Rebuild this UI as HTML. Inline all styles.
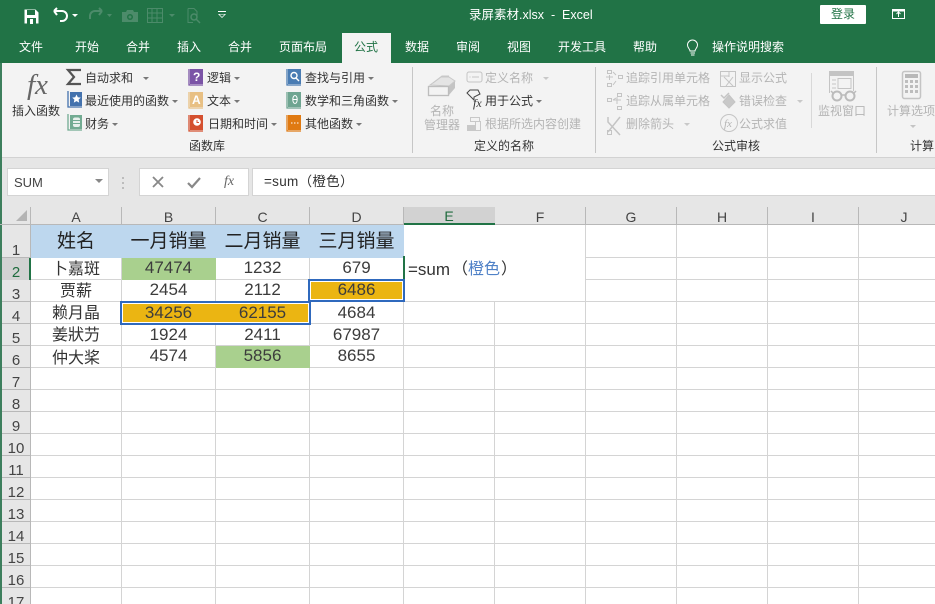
<!DOCTYPE html>
<html lang="zh"><head><meta charset="utf-8"><title>录屏素材.xlsx - Excel</title>
<style>
html,body{margin:0;padding:0;width:935px;height:604px;overflow:hidden;background:#fff}
body{position:relative;font-family:"Liberation Sans","Noto Sans CJK SC",sans-serif;font-size:12px;color:#333}
.a{position:absolute}
.t{position:absolute;white-space:nowrap;line-height:18px;height:18px}
.w{color:#fff}
.g{color:#b4b4b4}
.tab{position:absolute;top:38px;height:18px;line-height:18px;color:#fff;white-space:nowrap;transform:translateX(-50%)}
.ar::after{content:"";display:inline-block;margin-left:3px;vertical-align:2px;border:3px solid transparent;border-top:3px solid #777;border-bottom:0}
.gar::after{content:"";display:inline-block;margin-left:3px;vertical-align:2px;border:3px solid transparent;border-top:3px solid #c8c8c8;border-bottom:0}
.c{position:absolute;text-align:center;font-size:16px;color:#333;height:22px;line-height:21px;white-space:nowrap}
.n{font-size:17px;color:#3c3c3c}
.h{position:absolute;text-align:center;font-size:19px;color:#222;height:32px;line-height:33px;top:225px;white-space:nowrap}
.col{position:absolute;top:208px;height:18px;line-height:19px;text-align:center;font-size:14px;color:#444}
.row{position:absolute;left:2px;width:28px;text-align:center;font-size:15px;color:#444;height:20px;line-height:20px}
</style></head>
<body>
<!-- title & tabs -->
<div class="a" style="left:0;top:0;width:935px;height:63px;background:#217346"></div>
<div class="a" style="left:342px;top:33px;width:49px;height:30px;background:#f3f3f3"></div>
<div class="a" style="left:2px;top:63px;width:933px;height:94px;background:#f3f3f3"></div>
<div class="a" style="left:2px;top:157px;width:933px;height:50px;background:#e6e6e6;border-top:1px solid #d2d2d2;box-sizing:border-box"></div>

<svg class="a" style="left:0;top:0" width="300" height="32">
 <path d="M24.500 9.500h11l3 3v11h-14z" fill="#fff"/><rect x="27" y="10" width="8" height="5" fill="#217346"/><rect x="27" y="18" width="9" height="6" fill="#217346"/><rect x="30" y="19" width="3" height="5" fill="#fff"/>
 <path d="M54 11l3-3M54 11l3 4M54 11h8a5 5 0 0 1 0 10h-2" fill="none" stroke="#fff" stroke-width="2"/>
 <path d="M72 14h6l-3 3z" fill="#fff"/>
 <path d="M102 11l-3-3M102 11l-3 4M102 11h-7a5 5 0 0 0-5 5v3" fill="none" stroke="#4c8b6a" stroke-width="2"/>
 <path d="M107 14h5l-2.500 3z" fill="#4c8b6a"/>
 <path d="M122 12h4l1-2h6l1 2h4v10h-16z" fill="#4c8b6a"/><circle cx="130" cy="17" r="3" fill="#217346"/><circle cx="130" cy="17" r="1.500" fill="#4c8b6a"/>
 <rect x="147.500" y="8.500" width="15" height="14" fill="none" stroke="#4c8b6a"/><path d="M147 13h16M147 18h16M152 8v15M157 8v15" stroke="#4c8b6a"/>
 <path d="M169 14h6l-3 3z" fill="#4c8b6a"/>
 <path d="M188 8.500h6l3 3v5M188 8.500v14h5" fill="none" stroke="#4c8b6a"/><circle cx="194" cy="17" r="3" fill="none" stroke="#4c8b6a" stroke-width="1.500"/><path d="M196 19l4 4" stroke="#4c8b6a" stroke-width="1.500"/>
 <path d="M218 11.500h8" stroke="#fff"/><path d="M218 14h8l-4 4z" fill="#fff"/><path d="M219.500 14.500h5l-2.500 2.500z" fill="#217346"/>
</svg>
<div class="t w" style="left:469px;top:6px;font-size:12.500px">录屏素材.xlsx&nbsp; -&nbsp; Excel</div>
<div class="a" style="left:820px;top:5px;width:46px;height:19px;background:#fff;border-radius:1px;color:#217346;text-align:center;line-height:19px">登录</div>
<svg class="a" style="left:890px;top:6px" width="20" height="16"><rect x="2.500" y="3.500" width="12" height="9" fill="none" stroke="#fff"/><path d="M2 4.500h13" stroke="#fff" stroke-width="2"/><path d="M8.500 11V6.500M6.500 8l2-2 2 2" fill="none" stroke="#fff"/></svg>

<div class="tab" style="left:31px">文件</div>
<div class="tab" style="left:87px">开始</div>
<div class="tab" style="left:138px">合并</div>
<div class="tab" style="left:189px">插入</div>
<div class="tab" style="left:240px">合并</div>
<div class="tab" style="left:303px">页面布局</div>
<div class="tab" style="left:366px;color:#217346">公式</div>
<div class="tab" style="left:417px">数据</div>
<div class="tab" style="left:468px">审阅</div>
<div class="tab" style="left:519px">视图</div>
<div class="tab" style="left:582px">开发工具</div>
<div class="tab" style="left:645px">帮助</div>
<svg class="a" style="left:684px;top:38px" width="18" height="20" fill="none" stroke="#fff"><path d="M6 13c0-2-2.500-3-2.500-6a5 5 0 0 1 10 0c0 3-2.500 4-2.500 6z"/><path d="M6.500 15h4.500M7 17h3.500"/></svg>
<div class="tab" style="left:748px">操作说明搜索</div>

<!-- ribbon: function library -->
<div class="t" style="left:27px;top:69px;font:italic 29px/32px 'Liberation Serif',serif;height:32px;color:#666">fx</div>
<div class="t" style="left:12px;top:102px">插入函数</div>
<svg class="a" style="left:0;top:63px" width="420" height="94">
 <path d="M81 7h-13l6 7-6 7h13" fill="none" stroke="#555" stroke-width="2.200"/>
 <!-- recent -->
 <rect x="70" y="29" width="12" height="14" fill="#4472ad"/><path d="M68 28v16h14" fill="none" stroke="#4472ad" stroke-width="1.300"/><path d="M76.500 31.500l1.300 2.800 3 .3-2.200 2 .6 3-2.700-1.500-2.700 1.500.6-3-2.200-2 3-.3z" fill="#fff"/>
 <!-- finance -->
 <rect x="70" y="52" width="12" height="14" fill="#72ab92"/><path d="M68 51v16h14" fill="none" stroke="#72ab92" stroke-width="1.300"/><rect x="73" y="54.500" width="7" height="9.500" rx="2" fill="#e8f0ec"/><path d="M73 57.500h7M73 60.500h7" stroke="#72ab92"/>
 <!-- logic -->
 <rect x="190" y="6" width="13" height="15" fill="#7b54a6"/><path d="M189 6v16h14" fill="none" stroke="#7b54a6" stroke-width="1.300"/>
 <!-- text -->
 <rect x="190" y="29" width="13" height="15" fill="#e8c084"/><path d="M189 29v16h14" fill="none" stroke="#e8c084" stroke-width="1.300"/>
 <!-- date -->
 <rect x="190" y="52" width="13" height="15" fill="#d4502f"/><path d="M189 52v16h14" fill="none" stroke="#d4502f" stroke-width="1.300"/><circle cx="197" cy="59" r="3.800" fill="#fff"/><path d="M197 57v2.500h2" stroke="#d4502f" fill="none"/>
 <!-- lookup -->
 <rect x="288" y="6" width="13" height="15" fill="#4a7cb3"/><path d="M287 6v16h14" fill="none" stroke="#4a7cb3" stroke-width="1.300"/><circle cx="294" cy="12.500" r="3" fill="none" stroke="#fff" stroke-width="1.400"/><path d="M296 15l3 3" stroke="#fff" stroke-width="1.400"/>
 <!-- math -->
 <rect x="288" y="29" width="13" height="15" fill="#6fa591"/><path d="M287 29v16h14" fill="none" stroke="#6fa591" stroke-width="1.300"/><ellipse cx="295" cy="36.500" rx="2.200" ry="4" fill="none" stroke="#fff"/><path d="M293 36.500h4" stroke="#fff"/>
 <!-- other -->
 <rect x="288" y="52" width="13" height="15" fill="#e07a12"/><path d="M287 52v16h14" fill="none" stroke="#e07a12" stroke-width="1.300"/><path d="M291 60h1.500M294 60h1.500M297 60h1.500" stroke="#fff"/>
 <path d="M412.500 4v86" stroke="#c6c6c6"/>
</svg>
<div class="t" style="left:193px;top:68px;width:9px;color:#fff;font-weight:bold">?</div>
<div class="t" style="left:192px;top:91px;width:9px;color:#fff;font-weight:bold">A</div>
<div class="t ar" style="left:85px;top:69px">自动求和 &nbsp;</div>
<div class="t ar" style="left:85px;top:92px">最近使用的函数</div>
<div class="t ar" style="left:85px;top:115px">财务</div>
<div class="t ar" style="left:207px;top:69px">逻辑</div>
<div class="t ar" style="left:207px;top:92px">文本</div>
<div class="t ar" style="left:208px;top:115px">日期和时间</div>
<div class="t ar" style="left:305px;top:69px">查找与引用</div>
<div class="t ar" style="left:305px;top:92px">数学和三角函数</div>
<div class="t ar" style="left:305px;top:115px">其他函数</div>
<div class="t" style="left:189px;top:137px">函数库</div>

<!-- defined names -->
<svg class="a" style="left:420px;top:63px" width="180" height="94">
 <path d="M29 32l6-7v-7l-6 5z" fill="#c4c4c4"/>
 <path d="M10 22l11-8h8l6 4-6 5z" fill="#e4e4e4" stroke="#c8c8c8"/><path d="M13 20l9-7h7" fill="none" stroke="#c8c8c8"/>
 <rect x="8.500" y="23.500" width="20" height="9" fill="#f3f3f3" stroke="#bdbdbd" stroke-width="1.300"/>
 <rect x="47" y="9" width="15" height="10" rx="2" fill="none" stroke="#c4c4c4"/><path d="M52 14h7M49.500 14h1" stroke="#c4c4c4"/>
 <path d="M47 30l3-3h8l2 4-6 3v3l-3-3z" fill="none" stroke="#444"/><text x="53" y="44" font-family="Liberation Serif" font-style="italic" font-size="12" fill="#333">fx</text>
 <rect x="47" y="62" width="8" height="6" fill="#c8c8c8"/><rect x="55.500" y="58.500" width="5" height="9" fill="none" stroke="#c8c8c8"/><rect x="50.500" y="54.500" width="9" height="4" fill="none" stroke="#c8c8c8"/>
 <path d="M175.500 4v86" stroke="#c6c6c6"/>
</svg>
<div class="t g" style="left:430px;top:102px">名称</div>
<div class="t g" style="left:424px;top:116px">管理器</div>
<div class="t g gar" style="left:485px;top:69px">定义名称 &nbsp;</div>
<div class="t ar" style="left:485px;top:92px">用于公式</div>
<div class="t g" style="left:485px;top:115px">根据所选内容创建</div>
<div class="t" style="left:474px;top:137px">定义的名称</div>

<!-- auditing -->
<svg class="a" style="left:600px;top:63px" width="335" height="94" fill="none" stroke="#c4c4c4">
 <path d="M7.500 7.500h4v3h-4zM7.500 20.500h4v3h-4zM18.500 12.500h4v3h-4zM13 9l3 3M13 22l3-4M6 14h7M9.500 12v5"/>
 <path d="M7.500 35.500h4v3h-4zM17.500 30.500h4v3h-4zM17.500 43.500h4v3h-4zM13 37h8M17 34v7M13 37l3-2"/>
 <path d="M8 54v5l12 13M20 54L8 69" stroke-width="1.500"/><path d="M7.500 67.500h4v4h-4z"/>
 <rect x="120.500" y="8.500" width="15" height="15"/><path d="M121 13h8M129 8v6M124 14l9 9M133 14l-7 9"/>
 <path d="M121 32l3 3 5-5" stroke-width="1.500"/><path d="M129 32l6 7-6 6-6-6z" fill="#c8c8c8"/>
 <circle cx="129" cy="60" r="8.500"/><text x="124" y="64" font-family="Liberation Serif" font-style="italic" font-size="11" fill="#b4b4b4" stroke="none">fx</text>
 <path d="M211.500 10v55" stroke="#d8d8d8"/>
 <rect x="229" y="8" width="25" height="5" fill="#c4c4c4" stroke="none"/><path d="M229.500 10v20M253.500 10v18"/><rect x="238" y="15.500" width="13" height="10"/><path d="M232 17h4M232 21h4M232 25h4"/>
 <circle cx="237" cy="33" r="4.500" stroke-width="2" stroke="#bbb"/><circle cx="250" cy="33" r="4.500" stroke-width="2" stroke="#bbb"/><path d="M241 32h5M231 28l2 2M256 28l-2 2" stroke="#bbb" stroke-width="1.500"/>
 <path d="M276.500 4v86" stroke="#c6c6c6"/>
 <rect x="302.500" y="8.500" width="18" height="27" rx="2" stroke-width="1.500"/><rect x="305" y="11" width="13" height="4" fill="#b8b8b8" stroke="none"/>
 <g fill="#bdbdbd" stroke="none"><path d="M305 17h3v3h-3zM310 17h3v3h-3zM315 17h3v3h-3zM305 22h3v3h-3zM310 22h3v3h-3zM315 22h3v3h-3zM305 27h3v3h-3zM310 27h3v3h-3zM315 27h3v3h-3z"/></g>
</svg>
<div class="t g" style="left:626px;top:69px">追踪引用单元格</div>
<div class="t g" style="left:626px;top:92px">追踪从属单元格</div>
<div class="t g gar" style="left:626px;top:115px">删除箭头 &nbsp;</div>
<div class="t g" style="left:739px;top:69px">显示公式</div>
<div class="t g gar" style="left:739px;top:92px">错误检查 &nbsp;</div>
<div class="t g" style="left:739px;top:115px">公式求值</div>
<div class="t g" style="left:818px;top:102px">监视窗口</div>
<div class="t" style="left:712px;top:137px">公式审核</div>
<div class="t g" style="left:887px;top:102px">计算选项</div>
<div class="a" style="left:910px;top:125px;border:3px solid transparent;border-top:3px solid #c4c4c4;border-bottom:0"></div>
<div class="t" style="left:910px;top:137px">计算</div>

<!-- formula bar -->
<div class="a" style="left:7px;top:168px;width:102px;height:28px;background:#fff;border:1px solid #d4d4d4;box-sizing:border-box;padding-left:6px;line-height:27px;color:#444;font-size:13px">SUM</div>
<div class="a" style="left:95px;top:179px;border:4px solid transparent;border-top:4px solid #888;border-bottom:0"></div>
<svg class="a" style="left:120px;top:175px" width="8" height="16"><path d="M2 2h2v2H2zM2 7h2v2H2zM2 12h2v2H2z" fill="#bcbcbc"/></svg>
<div class="a" style="left:139px;top:168px;width:110px;height:28px;background:#fff;border:1px solid #d4d4d4;box-sizing:border-box"></div>
<svg class="a" style="left:139px;top:168px" width="110" height="28"><path d="M14 9l10 10M24 9L14 19" stroke="#888" stroke-width="1.800"/><path d="M49 15l4 4 8-9" fill="none" stroke="#888" stroke-width="2.200"/></svg>
<div class="t" style="left:224px;top:173px;font:italic 14px/18px 'Liberation Serif',serif;color:#666">fx</div>
<div class="a" style="left:252px;top:168px;width:683px;height:28px;background:#fff;border:1px solid #d4d4d4;border-right:0;box-sizing:border-box"></div>
<div class="t" style="left:264px;top:173px;font-size:13.500px;color:#333;letter-spacing:.3px">=sum（橙色）</div>

<!-- sheet -->
<div class="a" style="left:0;top:207px;width:935px;height:18px;background:#e6e6e6"></div>
<div class="a" style="left:0;top:225px;width:31px;height:379px;background:#e6e6e6"></div>
<div class="a" style="left:0;top:63px;width:2px;height:541px;background:#3d7f5d"></div>
<svg class="a" style="left:0;top:207px" width="935" height="397">
 <path d="M27 3v11H16z" fill="#b4b4b4"/>
 <g stroke="#d4d4d4">
  <path d="M121.500 18v379M215.500 18v379M309.500 18v379M403.500 18v379M494.500 18v379M585.500 18v379M676.500 18v379M767.500 18v379M858.500 18v379"/>
  <path d="M31 50.500h904M31 72.500h904M31 94.500h904M31 116.500h904M31 138.500h904M31 160.500h904M31 182.500h904M31 204.500h904M31 226.500h904M31 248.500h904M31 270.500h904M31 292.500h904M31 314.500h904M31 336.500h904M31 358.500h904M31 380.500h904"/>
 </g>
 <g stroke="#b8b8b8">
  <path d="M30.500 0v397M0 17.500h935"/>
  <path d="M121.500 0v18M215.500 0v18M309.500 0v18M403.500 0v18M494.500 0v18M585.500 0v18M676.500 0v18M767.500 0v18M858.500 0v18"/>
  <path d="M2 50.500h28M2 72.500h28M2 94.500h28M2 116.500h28M2 138.500h28M2 160.500h28M2 182.500h28M2 204.500h28M2 226.500h28M2 248.500h28M2 270.500h28M2 292.500h28M2 314.500h28M2 336.500h28M2 358.500h28M2 380.500h28"/>
 </g>
</svg>
<!-- selected headers -->
<div class="a" style="left:404px;top:207px;width:91px;height:18px;background:#d2d2d2;border-bottom:2px solid #217346;box-sizing:border-box"></div>
<div class="a" style="left:2px;top:258px;width:28px;height:22px;background:#d2d2d2"></div>
<div class="a" style="left:29px;top:258px;width:2px;height:22px;background:#217346"></div>

<!-- fills -->
<div class="a" style="left:31px;top:225px;width:373px;height:33px;background:#bdd7ee"></div>
<div class="a" style="left:122px;top:258px;width:94px;height:22px;background:#a9d08e"></div>
<div class="a" style="left:216px;top:346px;width:94px;height:22px;background:#a9d08e"></div>
<!-- E1:F3 merged white block -->
<div class="a" style="left:404px;top:225px;width:182px;height:76px;background:#fff;border-right:1px solid #d4d4d4;box-sizing:border-box"></div>
<div class="a" style="left:120px;top:301px;width:191px;height:24px;background:#ebb512;border:2px solid #2f69bd;outline:1px solid #fff;outline-offset:-3px;box-sizing:border-box"></div>
<div class="a" style="left:308px;top:279px;width:97px;height:23px;background:#ebb512;border:2px solid #2f69bd;outline:1px solid #fff;outline-offset:-3px;box-sizing:border-box"></div>
<div class="a" style="left:403px;top:256px;width:2px;height:23px;background:#217346"></div>

<!-- headers text -->
<div class="col" style="left:31px;width:90px">A</div><div class="col" style="left:122px;width:93px">B</div><div class="col" style="left:216px;width:93px">C</div><div class="col" style="left:310px;width:93px">D</div><div class="col" style="left:404px;width:90px;color:#1f6b3d;top:207px">E</div><div class="col" style="left:495px;width:90px">F</div><div class="col" style="left:586px;width:90px">G</div><div class="col" style="left:677px;width:90px">H</div><div class="col" style="left:768px;width:90px">I</div><div class="col" style="left:859px;width:90px">J</div>
<div class="row" style="top:241px">1</div><div class="row" style="top:263px;color:#1f6b3d">2</div><div class="row" style="top:285px">3</div><div class="row" style="top:307px">4</div><div class="row" style="top:329px">5</div><div class="row" style="top:351px">6</div><div class="row" style="top:373px">7</div><div class="row" style="top:395px">8</div><div class="row" style="top:417px">9</div><div class="row" style="top:439px">10</div><div class="row" style="top:461px">11</div><div class="row" style="top:483px">12</div><div class="row" style="top:505px">13</div><div class="row" style="top:527px">14</div><div class="row" style="top:549px">15</div><div class="row" style="top:571px">16</div><div class="row" style="top:593px">17</div>

<!-- cells -->
<div class="h" style="left:31px;width:90px">姓名</div><div class="h" style="left:122px;width:93px">一月销量</div><div class="h" style="left:216px;width:93px">二月销量</div><div class="h" style="left:310px;width:93px">三月销量</div>
<div class="c" style="left:31px;width:90px;top:259px">卜嘉斑</div><div class="c n" style="left:122px;width:93px;top:257px">47474</div><div class="c n" style="left:216px;width:93px;top:257px">1232</div><div class="c n" style="left:310px;width:93px;top:257px">679</div>
<div class="c" style="left:31px;width:90px;top:281px">贾薪</div><div class="c n" style="left:122px;width:93px;top:279px">2454</div><div class="c n" style="left:216px;width:93px;top:279px">2112</div><div class="c n" style="left:310px;width:93px;top:279px">6486</div>
<div class="c" style="left:31px;width:90px;top:303px">赖月晶</div><div class="c n" style="left:122px;width:93px;top:302px">34256</div><div class="c n" style="left:216px;width:93px;top:302px">62155</div><div class="c n" style="left:310px;width:93px;top:302px">4684</div>
<div class="c" style="left:31px;width:90px;top:325px">姜狀芀</div><div class="c n" style="left:122px;width:93px;top:324px">1924</div><div class="c n" style="left:216px;width:93px;top:324px">2411</div><div class="c n" style="left:310px;width:93px;top:324px">67987</div>
<div class="c" style="left:31px;width:90px;top:348px">仲大桨</div><div class="c n" style="left:122px;width:93px;top:345px">4574</div><div class="c n" style="left:216px;width:93px;top:345px">5856</div><div class="c n" style="left:310px;width:93px;top:345px">8655</div>
<div class="c n" style="left:408px;top:259px;text-align:left;color:#333">=sum</div>
<div class="c" style="left:452px;top:259px;text-align:left">（</div>
<div class="c" style="left:468px;top:259px;text-align:left;color:#4f81c7">橙色</div>
<div class="c" style="left:501px;top:259px;text-align:left">）</div>
</body></html>
